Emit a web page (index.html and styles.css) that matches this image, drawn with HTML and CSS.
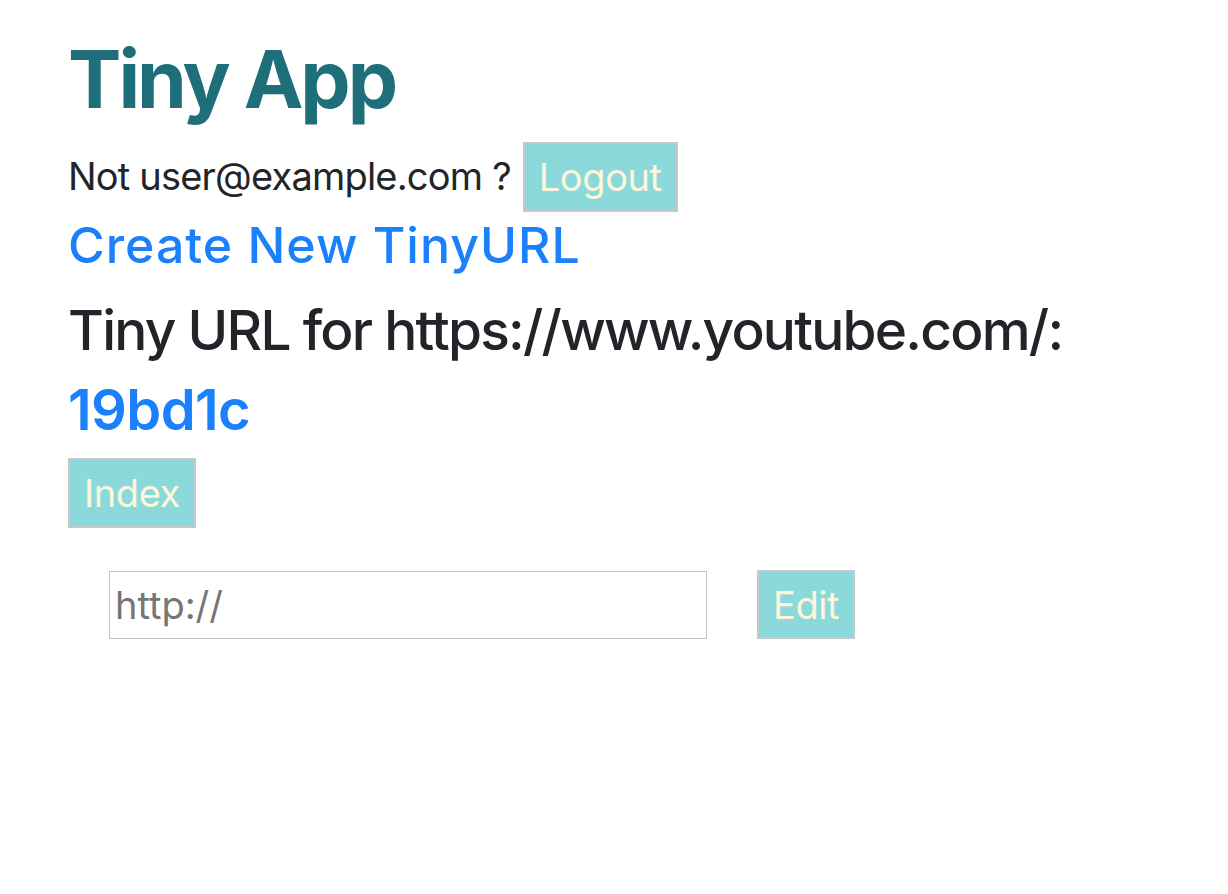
FILE: index.html
```html
<!DOCTYPE html>
<html lang="en">
<head>
<meta charset="utf-8">
<title>Tiny App</title>
<link rel="stylesheet" href="styles.css">
</head>
<body>
<main class="page">
  <h1 class="title">Tiny App</h1>
  <div class="user-row">
    <span class="user-text">Not user@example.com ?</span>
    <button class="btn btn-logout" type="button">Logout</button>
  </div>
  <a class="create-link" href="#">Create New TinyURL</a>
  <h3 class="url-heading">Tiny URL for https://www.youtube.com/:</h3>
  <a class="short-link" href="#">19bd1c</a>
  <div class="index-row">
    <button class="btn btn-index" type="button">Index</button>
  </div>
  <form class="edit-form">
    <input class="url-input" type="text" placeholder="http://">
    <button class="btn btn-edit" type="button">Edit</button>
  </form>
</main>
</body>
</html>
```

FILE: styles.css
```css
* { box-sizing: border-box; }

html, body {
  margin: 0;
  padding: 0;
  background: #ffffff;
}

body {
  font-family: Inter, "Noto Sans", "Liberation Sans", sans-serif;
  color: #212529;
}

.page {
  display: flex;
  flex-direction: column;
  align-items: flex-start;
  padding: 31px 68px 0 68px;
}

.title {
  margin: 0;
  font-size: 80px;
  line-height: 96px;
  font-weight: 700;
  color: #1e6f79;
  letter-spacing: -3px;
}

.user-row {
  display: flex;
  align-items: center;
  margin-top: 15px;
  gap: 12px;
}

.user-text {
  font-size: 38px;
  line-height: 1.2;
  letter-spacing: -0.8px;
}

.btn {
  font-family: Inter, "Noto Sans", "Liberation Sans", sans-serif;
  background: #8bd9da;
  color: #fdf6da;
  border: 2px solid #c8c8c8;
  font-size: 38px;
  line-height: 1;
  padding: 0 14px;
  cursor: pointer;
  border-radius: 0;
  letter-spacing: -0.4px;
}

.btn-logout {
  height: 70px;
}

.create-link {
  margin-top: 5px;
  font-size: 50px;
  line-height: 57.6px;
  font-weight: 500;
  color: #1a80fb;
  text-decoration: none;
  letter-spacing: 1px;
}

.url-heading {
  margin: 22px 0 0 0;
  font-size: 55px;
  line-height: 67.2px;
  font-weight: 500;
  letter-spacing: -1.75px;
}

.short-link {
  margin-top: 13px;
  font-size: 56px;
  line-height: 67.2px;
  font-weight: 600;
  color: #1a80fb;
  text-decoration: none;
  letter-spacing: -0.6px;
}

.index-row {
  margin-top: 14px;
}

.btn-index {
  height: 70px;
  padding: 0 14px;
}

.edit-form {
  display: flex;
  align-items: center;
  gap: 50px;
  margin: 42px 0 0 41px;
}

.url-input {
  width: 598px;
  height: 68px;
  border: 1px solid #c3c3c3;
  padding: 0 5px;
  font-family: Inter, "Noto Sans", "Liberation Sans", sans-serif;
  font-size: 38px;
  color: #212529;
  outline: none;
}

.url-input::placeholder {
  color: #767676;
}

.btn-edit {
  height: 69px;
  padding: 0 14px;
}
```
